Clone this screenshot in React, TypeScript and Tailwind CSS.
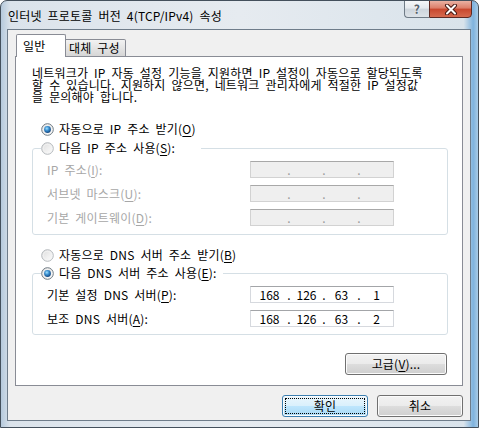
import clsx from "clsx";

type RadioProps = { checked?: boolean };

function Radio({ checked }: RadioProps) {
  return (
    <svg width="13" height="13" viewBox="0 0 13 13" className="shrink-0">
      <defs>
        <linearGradient id="rbg" x1="0" y1="0" x2="1" y2="1">
          <stop offset="0" stopColor="#dcdcdc" />
          <stop offset="1" stopColor="#ffffff" />
        </linearGradient>
        <radialGradient id="rdot" cx="0.4" cy="0.35" r="0.7">
          <stop offset="0" stopColor="#9fe0ff" />
          <stop offset="0.45" stopColor="#3a8fd0" />
          <stop offset="1" stopColor="#0f3f78" />
        </radialGradient>
      </defs>
      <circle cx="6.5" cy="6.5" r="5.8" fill="url(#rbg)" stroke={checked ? "#6d7880" : "#b4b8bc"} strokeWidth="1" />
      <circle cx="6.5" cy="6.5" r="4.3" fill="none" stroke="#f4f4f4" strokeWidth="0.8" />
      {checked && <circle cx="6.5" cy="6.5" r="3.4" fill="url(#rdot)" />}
    </svg>
  );
}

function IpBox({ parts, disabled }: { parts?: string[]; disabled?: boolean }) {
  const p = parts ?? ["", "", "", ""];
  const dot = clsx("w-[2px] flex justify-center", disabled ? "text-[#9a9a9a]" : "text-black");
  return (
    <div
      className={clsx(
        "w-[144px] h-[17px] border flex items-center text-[12px] leading-[15px] overflow-hidden tracking-normal",
        disabled ? "bg-[#efefef] border-[#d2d2d2] border-t-[#a8a8a8]" : "bg-white border-[#d6d9de] border-t-[#a3a5a8]"
      )}
    >
      <span className="w-[37px] text-center">{p[0]}</span>
      <span className={dot}>.</span>
      <span className="w-[33px] text-center">{p[1]}</span>
      <span className={dot}>.</span>
      <span className="w-[33px] text-center">{p[2]}</span>
      <span className={dot}>.</span>
      <span className="flex-1 text-center">{p[3]}</span>
    </div>
  );
}

function Btn({ label, w, focused }: { label: React.ReactNode; w: string; focused?: boolean }) {
  return (
    <button
      className={clsx(
        "h-[22px] rounded-[3px] border flex items-stretch text-[12px] leading-[16px] text-black shadow-[inset_0_0_0_1px_#fbfbfb]",
        focused
          ? "border-[#3c7fb1] bg-[linear-gradient(180deg,#eaf6fd_0%,#d9f0fc_50%,#bee6fd_50%,#a7d9f5_100%)]"
          : "border-[#707070] bg-[linear-gradient(180deg,#f2f2f2_0%,#ebebeb_50%,#dddddd_50%,#cfcfcf_100%)]",
        w
      )}
    >
      <span
        className={clsx(
          "flex-1 m-[2px] flex items-center justify-center border",
          focused ? "border-dotted border-black" : "border-transparent"
        )}
      >
        {label}
      </span>
    </button>
  );
}

export default function App() {
  return (
    <div className="w-[479px] h-[428px] flex flex-col border border-[#44505c] rounded-t-[7px] overflow-hidden bg-[linear-gradient(90deg,#b5c9dc_0%,#dbe3eb_2%,#e6ebf0_50%,#d9e3eb_97%,#7fb3de_99%,#a9cbe6_100%)] font-['Noto_Sans_CJK_KR','Noto_Sans',sans-serif] tracking-[0.2px] [word-spacing:3px] text-black select-none">
      {/* title bar */}
      <div className="h-[28px] flex shrink-0">
        <div className="pl-[7px] pt-[7px] text-[12px] leading-[16px] text-black whitespace-nowrap">
          인터넷 프로토콜 버전 4(TCP/IPv4) 속성
        </div>
        <div className="ml-auto mr-[6px] flex h-[18px] -mt-px">
          <div className="w-[25px] border border-[#6f7b86] border-r-0 rounded-bl-[4px] bg-[linear-gradient(180deg,#f5f7f9_0%,#e4e9ee_45%,#cdd5dc_50%,#dde3e8_100%)] flex items-center justify-center text-[12px] leading-[14px] font-bold text-[#56616b] [text-shadow:0_0_2px_#ffffff]">
            ?
          </div>
          <div className="w-[43px] border border-[#5e2a24] rounded-br-[4px] bg-[linear-gradient(180deg,#eab1a3_0%,#dc7d68_45%,#c8472e_50%,#d66a4f_100%)] flex items-center justify-center">
            <svg width="14" height="11" viewBox="0 0 14 11">
              <path d="M3 1.5 L11 9.5 M11 1.5 L3 9.5" stroke="#4a1a14" strokeWidth="4" strokeLinecap="round" />
              <path d="M3 1.5 L11 9.5 M11 1.5 L3 9.5" stroke="#ffffff" strokeWidth="2" strokeLinecap="round" />
            </svg>
          </div>
        </div>
      </div>

      {/* client area */}
      <div className="flex-1 ml-[6px] mr-[7px] mb-[6px] bg-[#f0f0f0] border border-[#6e7c8a] flex flex-col text-[12px]">
        {/* tabs */}
        <div className="pt-[4px] pl-[8px] flex items-end -mb-px relative z-10">
          <div className="w-[50px] h-[23px] border border-b-0 border-[#898c95] rounded-t-[2px] bg-white pl-[6px] pt-[3px] leading-[16px]">
            일반
          </div>
          <div className="w-[60px] h-[18px] border border-l-0 border-[#898c95] rounded-tr-[2px] bg-[linear-gradient(180deg,#f2f2f2_0%,#e4e4e4_50%,#d6d6d6_100%)] pl-[3px] leading-[16px] whitespace-nowrap">
            대체 구성
          </div>
        </div>

        {/* panel */}
        <div className="ml-[7px] w-[448px] h-[330px] border border-[#898c95] bg-white flex flex-col">
          <div className="mt-[10px] ml-[16px] leading-[12px] whitespace-nowrap">
            <div>네트워크가 IP 자동 설정 기능을 지원하면 IP 설정이 자동으로 할당되도록</div>
            <div>할 수 있습니다. 지원하지 않으면, 네트워크 관리자에게 적절한 IP 설정값</div>
            <div>을 문의해야 합니다.</div>
          </div>

          <div className="mt-[18px] ml-[25px] h-[16px] flex items-center gap-[5px] leading-[16px]">
            <Radio checked />
            <span>
              자동으로 IP 주소 받기(<u className="underline-offset-2">O</u>)
            </span>
          </div>

          <fieldset className="mt-[3px] ml-[16px] w-[416px] border border-[#d5dfe5] rounded-[3px] pt-[5px] pb-[8px]">
            <legend className="ml-[8px] pr-[26px]">
              <div className="h-[16px] flex items-center gap-[5px] leading-[16px]">
                <Radio />
                <span>
                  다음 IP 주소 사용(<u className="underline-offset-2">S</u>):
                </span>
              </div>
            </legend>
            <div className="flex flex-col gap-[7px] text-[#a7a7a7]">
              <div className="flex items-center h-[17px]">
                <span className="w-[217px] pl-[14px]">
                  IP 주소(<u className="underline-offset-2">I</u>):
                </span>
                <IpBox disabled />
              </div>
              <div className="flex items-center h-[17px]">
                <span className="w-[217px] pl-[14px]">
                  서브넷 마스크(<u className="underline-offset-2">U</u>):
                </span>
                <IpBox disabled />
              </div>
              <div className="flex items-center h-[17px]">
                <span className="w-[217px] pl-[14px]">
                  기본 게이트웨이(<u className="underline-offset-2">D</u>):
                </span>
                <IpBox disabled />
              </div>
            </div>
          </fieldset>

          <div className="mt-[12px] ml-[25px] h-[16px] flex items-center gap-[5px] leading-[16px]">
            <Radio />
            <span>
              자동으로 DNS 서버 주소 받기(<u className="underline-offset-2">B</u>)
            </span>
          </div>

          <fieldset className="mt-[2px] ml-[16px] w-[416px] border border-[#d5dfe5] rounded-[3px] pt-[5px] pb-[7px]">
            <legend className="ml-[8px] pr-[6px]">
              <div className="h-[16px] flex items-center gap-[5px] leading-[16px]">
                <Radio checked />
                <span>
                  다음 DNS 서버 주소 사용(<u className="underline-offset-2">E</u>):
                </span>
              </div>
            </legend>
            <div className="flex flex-col gap-[7px]">
              <div className="flex items-center h-[17px]">
                <span className="w-[217px] pl-[14px]">
                  기본 설정 DNS 서버(<u className="underline-offset-2">P</u>):
                </span>
                <IpBox parts={["168", "126", "63", "1"]} />
              </div>
              <div className="flex items-center h-[17px]">
                <span className="w-[217px] pl-[14px]">
                  보조 DNS 서버(<u className="underline-offset-2">A</u>):
                </span>
                <IpBox parts={["168", "126", "63", "2"]} />
              </div>
            </div>
          </fieldset>

          <div className="mt-[18px] mr-[15px] self-end">
            <Btn
              w="w-[102px]"
              label={
                <span>
                  고급(<u className="underline-offset-2">V</u>)...
                </span>
              }
            />
          </div>
        </div>

        {/* dialog buttons */}
        <div className="mt-[9px] mr-[7px] flex justify-end gap-[9px]">
          <Btn w="w-[86px]" label="확인" focused />
          <Btn w="w-[86px]" label="취소" />
        </div>
      </div>
    </div>
  );
}
